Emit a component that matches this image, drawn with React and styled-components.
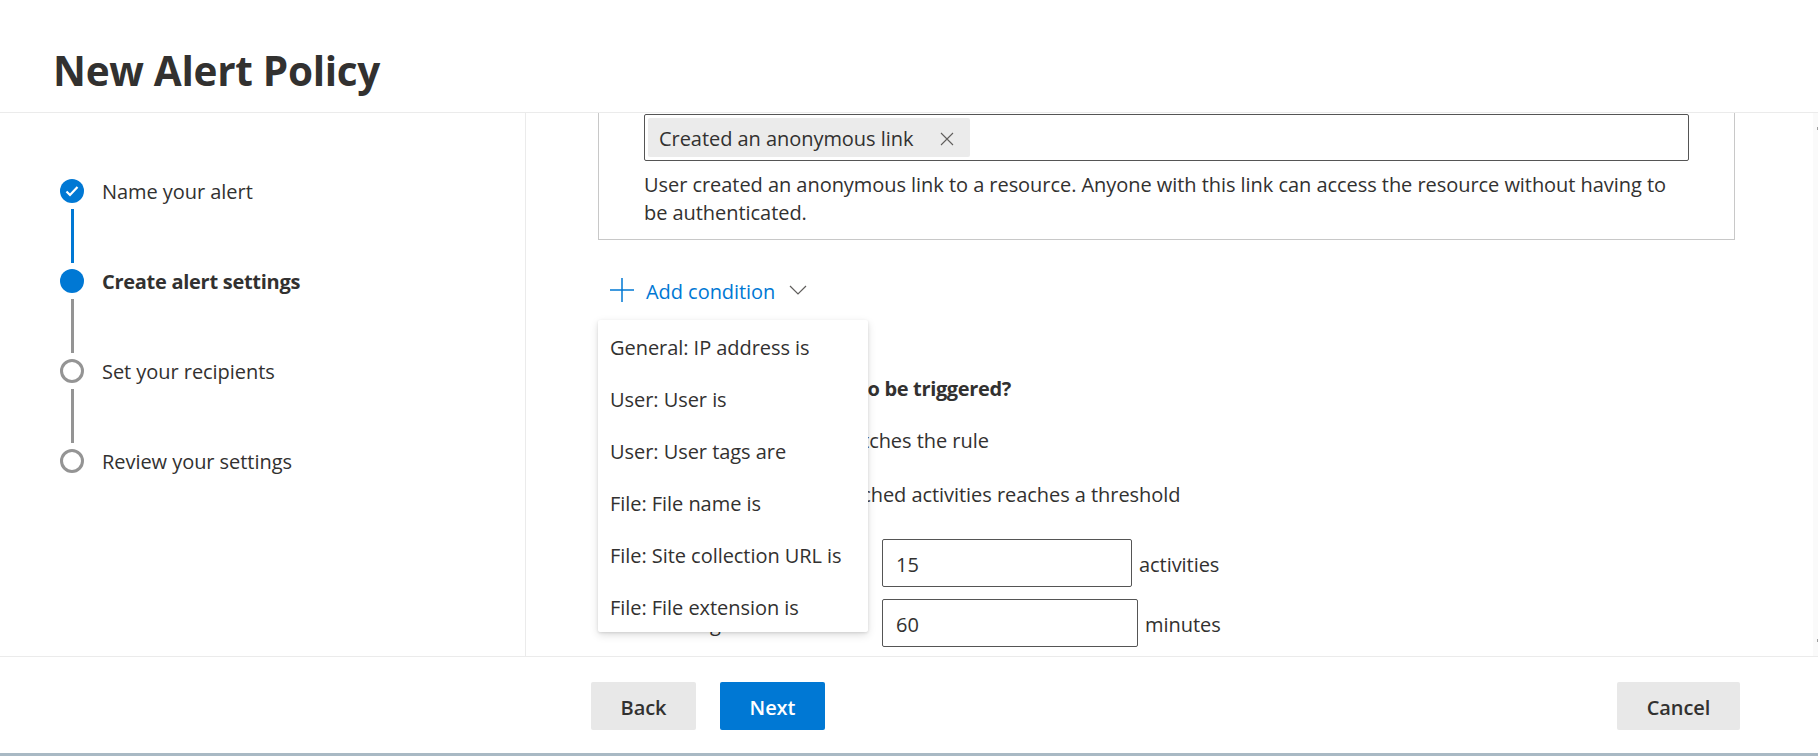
import React from "react";
import styled, { createGlobalStyle } from "styled-components";

const Global = createGlobalStyle`
  html, body { margin: 0; padding: 0; background: #fff; overflow: hidden; }
  * { box-sizing: border-box; }
  body { font-family: "Open Sans", "Noto Sans", sans-serif; color: #323130; }
`;

const Page = styled.div`
  width: 1818px; height: 756px; display: flex; flex-direction: column; background: #fff; overflow: hidden;
  border-bottom: 3px solid #a9b9c4;
`;
const Header = styled.header`
  height: 113px; flex: none; border-bottom: 1px solid #ebebeb; padding: 44px 0 0 53px;
`;
const Title = styled.h1`
  margin: 0; font-size: 40.5px; line-height: 54px; font-weight: 700; color: #323130; letter-spacing: -0.3px;
`;
const Body = styled.div`
  flex: 1; min-height: 0; display: flex;
`;
const Sidebar = styled.nav`
  width: 526px; flex: none; border-right: 1px solid #ebebeb; padding: 66px 0 0 60px;
`;
const Step = styled.div`
  display: flex; align-items: center; gap: 18px; height: 24px;
  font-size: 20px; white-space: nowrap; letter-spacing: ${(p) => (p.$active ? "-0.28px" : "-0.05px")};
  font-weight: ${(p) => (p.$active ? 700 : 400)};
  line-height: 22px;
`;
const StepLabel = styled.span`
  padding-top: 2px;
`;
const Dot = styled.span`
  width: 24px; height: 24px; border-radius: 50%; flex: none; display: flex; align-items: center; justify-content: center;
  background: ${(p) => (p.$filled ? "#0078d4" : "#fff")};
  border: ${(p) => (p.$filled ? "none" : "3px solid #949494")};
`;
const Connector = styled.div`
  width: 3px; height: 54px; margin: 6px 0 6px 11px;
  background: ${(p) => (p.$done ? "#0078d4" : "#949494")};
`;
const Main = styled.main`
  flex: 1; min-width: 0; display: flex;
`;
const Scroller = styled.div`
  position: relative; flex: 1; min-width: 0; overflow: hidden; padding: 0 78px 0 72px;
  font-size: 20px; letter-spacing: -0.05px;
`;
const Scrollbar = styled.div`
  width: 5px; flex: none; background: #fafafa; position: relative;
  &::before, &::after { content: ""; position: absolute; right: 0; width: 1px; height: 3px; background: #a0a0a0; }
  &::before { top: 14px; }
  &::after { bottom: 14px; }
`;
const ConditionBox = styled.section`
  height: 127px; border: 1px solid #c8c8c8; border-top: none; padding: 1px 45px 0 45px;
`;
const TagInput = styled.div`
  height: 47px; border: 1px solid #555; border-radius: 2px; padding: 3px; display: flex; align-items: flex-start;
`;
const Chip = styled.span`
  height: 39px; width: 322px; background: #ebebeb; border-radius: 2px; display: flex; align-items: center;
  justify-content: space-between; padding: 2px 16px 0 11px; white-space: nowrap;
`;
const Description = styled.p`
  margin: 10px 0 0; line-height: 28px;
`;
const AddButton = styled.div`
  margin-top: 25px; height: 50px; padding-left: 12px; display: flex; align-items: center;
  color: #0078d4;
`;
const AddLabel = styled.span`
  margin: 0 14px 0 12px; padding-top: 2px;
`;
const Question = styled.div`
  margin-top: 61px; height: 26px; line-height: 26px; font-weight: 700; letter-spacing: -0.35px;
`;
const Option = styled.label`
  display: flex; align-items: center; gap: 10px; height: 28px;
  margin-top: ${(p) => p.$gap}px;
`;
const Radio = styled.span`
  width: 24px; height: 24px; border-radius: 50%; border: 1px solid #605e5c; flex: none;
`;
const ThresholdRow = styled.div`
  display: flex; align-items: center; height: 48px; margin-top: ${(p) => p.$gap}px;
`;
const RowLabel = styled.span`
  width: 284px; flex: none; padding-left: 60px; white-space: nowrap; overflow: hidden;
`;
const NumberBox = styled.div`
  width: ${(p) => p.$width}px; height: 48px; border: 1px solid #555; border-radius: 2px; padding: 2px 13px 0;
  display: flex; align-items: center; margin-right: 7px;
`;
const Unit = styled.span`
  padding-top: 2px;
`;
const Menu = styled.ul`
  position: absolute; left: 72px; top: 207px; width: 270px; height: 312px; margin: 0; padding: 1px 0 0; list-style: none;
  background: #fff; border-radius: 2px; box-shadow: 0 3px 8px rgba(0,0,0,.13), 0 1px 3px rgba(0,0,0,.11);
`;
const MenuItem = styled.li`
  height: 52px; display: flex; align-items: center; padding-left: 12px; white-space: nowrap;
`;
const Footer = styled.footer`
  height: 97px; flex: none; border-top: 1px solid #ebebeb; padding: 25px 78px 0 591px; display: flex; gap: 24px;
`;
const Button = styled.button`
  height: 48px; width: ${(p) => p.$width}px; border: none; border-radius: 2px; padding: 2px 0 0;
  font-family: inherit; font-size: 20px; font-weight: 600; letter-spacing: -0.05px;
  background: ${(p) => (p.$primary ? "#0078d4" : "#e8e8e8")};
  color: ${(p) => (p.$primary ? "#fff" : "#323130")};
  margin-left: ${(p) => (p.$pushed ? "auto" : "0")};
`;

const CheckIcon = () => (
  <svg width="14" height="12" viewBox="0 0 14 12" fill="none" stroke="#fff" strokeWidth="2.2">
    <path d="M1.5 6.5 L5 10 L12.5 2" />
  </svg>
);
const CloseIcon = () => (
  <svg width="14" height="14" viewBox="0 0 14 14" fill="none" stroke="#605e5c" strokeWidth="1.1">
    <path d="M1 1 L13 13 M13 1 L1 13" />
  </svg>
);
const PlusIcon = () => (
  <svg width="24" height="24" viewBox="0 0 24 24" fill="none" stroke="#0078d4" strokeWidth="1.5">
    <path d="M12 0 V24 M0 12 H24" />
  </svg>
);
const ChevronIcon = () => (
  <svg width="18" height="10" viewBox="0 0 18 10" fill="none" stroke="#605e5c" strokeWidth="1.2">
    <path d="M1 1 L9 9 L17 1" />
  </svg>
);

const steps = [
  { label: "Name your alert", state: "done" },
  { label: "Create alert settings", state: "active" },
  { label: "Set your recipients", state: "todo" },
  { label: "Review your settings", state: "todo" },
];
const items = [
  "General: IP address is",
  "User: User is",
  "User: User tags are",
  "File: File name is",
  "File: Site collection URL is",
  "File: File extension is",
];

export default function App() {
  return (
    <Page>
      <Global />
      <Header>
        <Title>New Alert Policy</Title>
      </Header>
      <Body>
        <Sidebar>
          {steps.map((s, i) => (
            <React.Fragment key={s.label}>
              <Step $active={s.state === "active"}>
                <Dot $filled={s.state !== "todo"}>{s.state === "done" && <CheckIcon />}</Dot>
                <StepLabel>{s.label}</StepLabel>
              </Step>
              {i < steps.length - 1 && <Connector $done={s.state === "done"} />}
            </React.Fragment>
          ))}
        </Sidebar>
        <Main>
          <Scroller>
            <ConditionBox>
              <TagInput>
                <Chip>
                  Created an anonymous link
                  <CloseIcon />
                </Chip>
              </TagInput>
              <Description>
                User created an anonymous link to a resource. Anyone with this link can access the resource without having to be authenticated.
              </Description>
            </ConditionBox>
            <AddButton>
              <PlusIcon />
              <AddLabel>Add condition</AddLabel>
              <ChevronIcon />
            </AddButton>
            <Question>How do you want the alert to be triggered?</Question>
            <Option $gap={24}>
              <Radio />
              Every time an activity matches the rule
            </Option>
            <Option $gap={26}>
              <Radio />
              When the volume of matched activities reaches a threshold
            </Option>
            <ThresholdRow $gap={31}>
              <RowLabel>More than or equal to</RowLabel>
              <NumberBox $width={250}>15</NumberBox>
              <Unit>activities</Unit>
            </ThresholdRow>
            <ThresholdRow $gap={12}>
              <RowLabel>During the last</RowLabel>
              <NumberBox $width={256}>60</NumberBox>
              <Unit>minutes</Unit>
            </ThresholdRow>
            <Menu>
              {items.map((t) => (
                <MenuItem key={t}>{t}</MenuItem>
              ))}
            </Menu>
          </Scroller>
          <Scrollbar />
        </Main>
      </Body>
      <Footer>
        <Button $width={105}>Back</Button>
        <Button $width={105} $primary>Next</Button>
        <Button $width={123} $pushed>Cancel</Button>
      </Footer>
    </Page>
  );
}
